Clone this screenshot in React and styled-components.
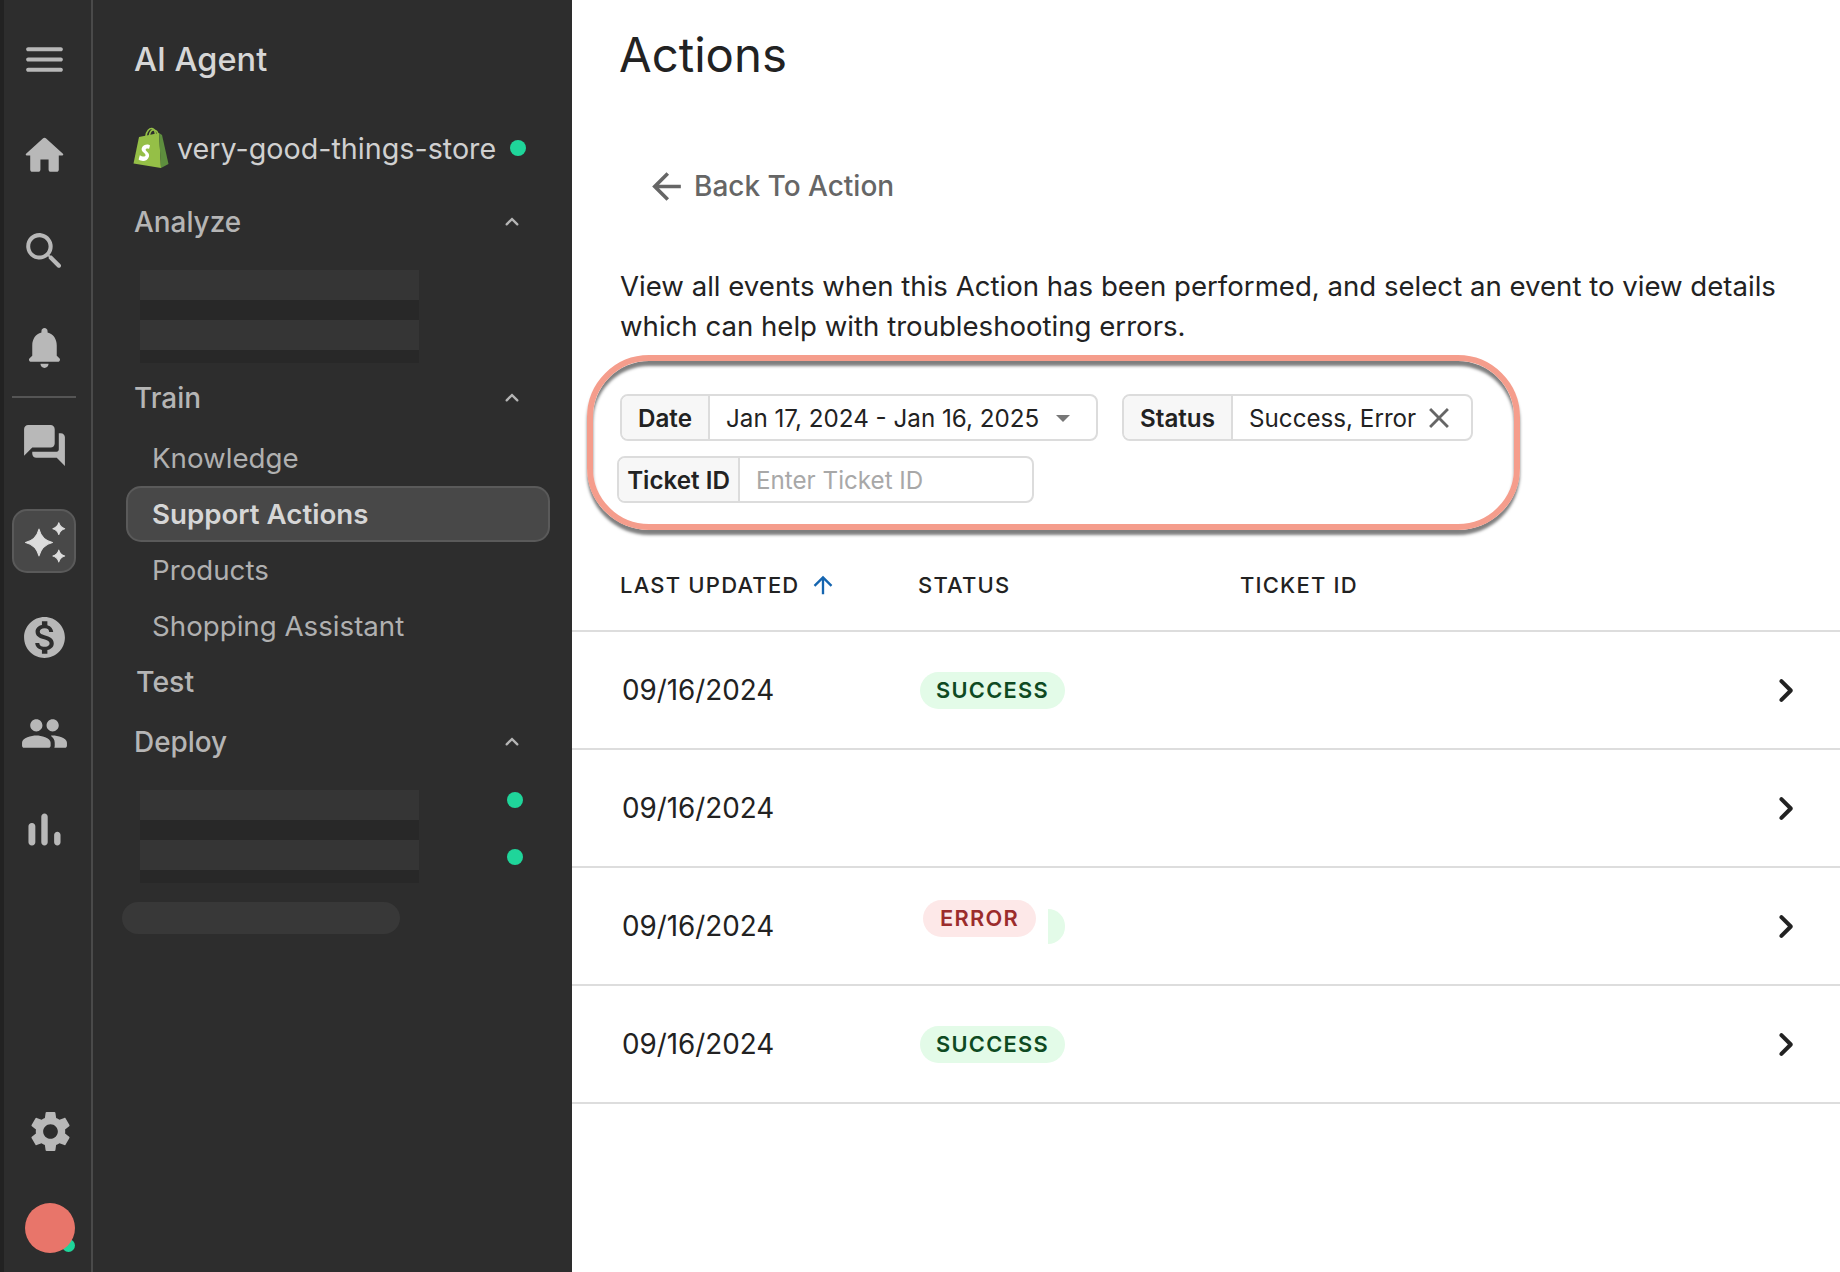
import React from 'react'
import styled, { createGlobalStyle } from 'styled-components'

const GlobalStyle = createGlobalStyle`
  html, body {
    margin: 0;
    padding: 0;
    background: #fff;
  }
  body {
    font-family: Inter, "Liberation Sans", sans-serif;
  }
`

const paths = {
  menu: 'M4 18h16c.55 0 1-.45 1-1s-.45-1-1-1H4c-.55 0-1 .45-1 1s.45 1 1 1zm0-5h16c.55 0 1-.45 1-1s-.45-1-1-1H4c-.55 0-1 .45-1 1s.45 1 1 1zM3 7c0 .55.45 1 1 1h16c.55 0 1-.45 1-1s-.45-1-1-1H4c-.55 0-1 .45-1 1z',
  home: 'M10 19v-5h4v5c0 .55.45 1 1 1h3c.55 0 1-.45 1-1v-7h1.7c.46 0 .68-.57.33-.87L12.67 3.6c-.38-.34-.96-.34-1.34 0l-8.36 7.53c-.34.3-.13.87.33.87H5v7c0 .55.45 1 1 1h3c.55 0 1-.45 1-1z',
  search: 'M15.5 14h-.79l-.28-.27c1.2-1.4 1.82-3.31 1.48-5.34-.47-2.78-2.79-5-5.59-5.34-4.2-.52-7.74 3.01-7.21 7.21.34 2.8 2.56 5.12 5.34 5.59 2.03.34 3.94-.28 5.34-1.48l.27.28v.79l4.25 4.25c.41.41 1.08.41 1.49 0 .41-.41.41-1.08 0-1.49L15.5 14zm-6 0C7.01 14 5 11.99 5 9.5S7.01 5 9.5 5 14 7.01 14 9.5 11.99 14 9.5 14z',
  bell: 'M12 22c1.1 0 2-.9 2-2h-4c0 1.1.9 2 2 2zm6-6v-5c0-3.07-1.63-5.64-4.5-6.32V4c0-.83-.67-1.5-1.5-1.5s-1.5.67-1.5 1.5v.68C7.64 5.36 6 7.92 6 11v5l-1.29 1.29c-.63.63-.19 1.71.7 1.71h13.17c.89 0 1.34-1.08.71-1.71L18 16z',
  forum: 'M20 6h-1v8c0 .55-.45 1-1 1H6v1c0 1.1.9 2 2 2h10l4 4V8c0-1.1-.9-2-2-2zm-3 5V4c0-1.1-.9-2-2-2H4c-1.1 0-2 .9-2 2v13l4-4h9c1.1 0 2-.9 2-2z',
  sparkle: 'M9.3 5.9 Q10.6 11.2 15.9 12.5 Q10.6 13.8 9.3 19.1 Q8 13.8 2.7 12.5 Q8 11.2 9.3 5.9Z M19 2.8 Q19.6 5.1 21.9 5.7 Q19.6 6.3 19 8.6 Q18.4 6.3 16.1 5.7 Q18.4 5.1 19 2.8Z M19 16.2 Q19.6 18.5 21.9 19.1 Q19.6 19.7 19 22 Q18.4 19.7 16.1 19.1 Q18.4 18.5 19 16.2Z',
  dollar: 'M12 2C6.48 2 2 6.48 2 12s4.48 10 10 10 10-4.48 10-10S17.52 2 12 2zm1.41 16.09V20h-2.67v-1.93c-1.71-.36-3.16-1.46-3.27-3.4h1.96c.1 1.05.82 1.87 2.65 1.87 1.96 0 2.4-.98 2.4-1.59 0-.83-.44-1.61-2.67-2.14-2.48-.6-4.18-1.62-4.18-3.67 0-1.72 1.39-2.84 3.11-3.21V4h2.67v1.95c1.86.45 2.79 1.86 2.85 3.39H14.3c-.05-1.11-.64-1.87-2.22-1.87-1.5 0-2.4.68-2.4 1.64 0 .84.65 1.39 2.67 1.91s4.18 1.39 4.18 3.91c-.01 1.83-1.38 2.83-3.12 3.16z',
  people: 'M16 11c1.66 0 2.99-1.34 2.99-3S17.66 5 16 5s-3 1.34-3 3 1.34 3 3 3zm-8 0c1.66 0 2.99-1.34 2.99-3S9.66 5 8 5 5 6.34 5 8s1.34 3 3 3zm0 2c-2.33 0-7 1.17-7 3.5V18c0 .55.45 1 1 1h12c.55 0 1-.45 1-1v-1.5c0-2.33-4.67-3.5-7-3.5zm8 0c-.29 0-.62.02-.97.05.02.01.03.03.04.04 1.14.83 1.93 1.94 1.93 3.41V18c0 .35-.07.69-.18 1H22c.55 0 1-.45 1-1v-1.5c0-2.33-4.67-3.5-7-3.5z',
  bars: 'M6.4 9.2h.2c.77 0 1.4.63 1.4 1.4v7c0 .77-.63 1.4-1.4 1.4h-.2c-.77 0-1.4-.63-1.4-1.4v-7c0-.77.63-1.4 1.4-1.4zM12 5c.77 0 1.4.63 1.4 1.4v11.2c0 .77-.63 1.4-1.4 1.4-.77 0-1.4-.63-1.4-1.4V6.4c0-.77.63-1.4 1.4-1.4zm5.6 8c.77 0 1.4.63 1.4 1.4v3.2c0 .77-.63 1.4-1.4 1.4-.77 0-1.4-.63-1.4-1.4v-3.2c0-.77.63-1.4 1.4-1.4z',
  settings: 'M19.14 12.94c.04-.3.06-.61.06-.94 0-.32-.02-.64-.07-.94l2.03-1.58c.18-.14.23-.41.12-.61l-1.92-3.32c-.12-.22-.37-.29-.59-.22l-2.39.96c-.5-.38-1.03-.7-1.62-.94l-.36-2.54c-.04-.24-.24-.41-.48-.41h-3.84c-.24 0-.43.17-.47.41l-.36 2.54c-.59.24-1.13.57-1.62.94l-2.39-.96c-.22-.08-.47 0-.59.22L2.74 8.87c-.12.21-.08.47.12.61l2.03 1.58c-.05.3-.09.63-.09.94s.02.64.07.94l-2.03 1.58c-.18.14-.23.41-.12.61l1.92 3.32c.12.22.37.29.59.22l2.39-.96c.5.38 1.03.7 1.62.94l.36 2.54c.05.24.24.41.48.41h3.84c.24 0 .44-.17.47-.41l.36-2.54c.59-.24 1.13-.56 1.62-.94l2.39.96c.22.08.47 0 .59-.22l1.92-3.32c.12-.22.07-.47-.12-.61l-2.01-1.58zM12 15.6c-1.98 0-3.6-1.62-3.6-3.6s1.62-3.6 3.6-3.6 3.6 1.62 3.6 3.6-1.62 3.6-3.6 3.6z',
  chevronRight: 'M9.29 6.71c-.39.39-.39 1.02 0 1.41L13.17 12l-3.88 3.88c-.39.39-.39 1.02 0 1.41.39.39 1.02.39 1.41 0l4.59-4.59c.39-.39.39-1.02 0-1.41L10.7 6.7c-.38-.38-1.02-.38-1.41.01z',
  chevronUp: 'M11.29 8.71 6.7 13.3c-.39.39-.39 1.02 0 1.41.39.39 1.02.39 1.41 0L12 10.83l3.88 3.88c.39.39 1.02.39 1.41 0 .39-.39.39-1.02 0-1.41L12.7 8.71c-.38-.39-1.02-.39-1.41 0z',
  arrowBack: 'M20 11H7.83l5.59-5.59L12 4l-8 8 8 8 1.41-1.41L7.83 13H20v-2z',
  arrowUp: 'M4 12l1.41 1.41L11 7.83V20h2V7.83l5.58 5.59L20 12l-8-8-8 8z',
  close: 'M19 6.41 17.59 5 12 10.59 6.41 5 5 6.41 10.59 12 5 17.59 6.41 19 12 13.41 17.59 19 19 17.59 13.41 12z',
}

const Icon = ({ name, size = 49, color = 'currentColor', thicken = 0 }) => (
  <svg width={size} height={size} viewBox="0 0 24 24" fill={color} aria-hidden="true">
    <path d={paths[name]} stroke={thicken ? color : 'none'} strokeWidth={thicken} strokeLinejoin="round" />
  </svg>
)

const ShopifyBag = () => (
  <svg width="36" height="42" viewBox="0 0 36 42" aria-hidden="true">
    <path d="M13 9 C13.5 4 16.5 1 19 1.5 C21.5 2 22.5 5 22.5 8.5" fill="none" stroke="#95bf47" strokeWidth="1.6" />
    <path d="M16.5 8 C17 4.5 19 2.5 21 3 C23.5 3.5 24.8 5.5 25 8" fill="none" stroke="#95bf47" strokeWidth="1.6" />
    <path d="M6 10 L26 6 L28 41 L0.5 36.5 Z" fill="#95bf47" />
    <path d="M26 6 L29 8 L35.5 37 L28 41 Z" fill="#5e8e3e" />
    <path
      d="M17 18.5 C15.5 17 10.5 17 8.8 21 C7.5 25 13 26 12.5 28.5 C12.2 30 9 29.8 6.8 28.2 L5.6 32.5 C9 35 14.5 34.5 16 29.5 C17 25.5 12.3 24.5 12.7 22.6 C13 21.3 15 21.3 16 22 Z"
      fill="#fff"
    />
  </svg>
)

const Page = styled.div`
  display: flex;
  width: 1840px;
  height: 1272px;
  overflow: hidden;
  background: #fff;
`

const Rail = styled.aside`
  display: flex;
  flex-direction: column;
  flex: 0 0 93px;
  box-sizing: border-box;
  padding: 11px 0 19px 8px;
  background: #2d2d2d;
  border-left: 4px solid #222222;
  border-right: 2px solid #4a4a4a;
  color: #b8b8b8;
`

const RailItem = styled.div`
  display: flex;
  align-items: center;
  justify-content: center;
  width: 64px;
  height: 96px;
`

const ActiveTile = styled.div`
  display: flex;
  align-items: center;
  justify-content: center;
  box-sizing: border-box;
  width: 64px;
  height: 64px;
  border: 2px solid #5a5a5a;
  border-radius: 15px;
  background: #484848;
  color: #dcdcdc;
`

const RailDivider = styled.hr`
  width: 64px;
  height: 2px;
  margin: 1px 0 -1px;
  border: 0;
  background: #555555;
`

const RailBottom = styled.div`
  display: flex;
  flex-direction: column;
  align-items: center;
  gap: 47px;
  width: 64px;
  margin-top: auto;
  margin-left: 6px;
`

const AvatarLayer = styled.div`
  position: relative;
  z-index: 0;
`

const Avatar = styled.div`
  position: relative;
  width: 50px;
  height: 50px;
  border-radius: 50%;
  background: #e8756a;

  &::before {
    content: '';
    position: absolute;
    right: 0;
    bottom: 1px;
    z-index: -1;
    width: 13px;
    height: 13px;
    border-radius: 50%;
    background: #1fd59a;
  }
`

const Nav = styled.nav`
  flex: 0 0 479px;
  box-sizing: border-box;
  padding-top: 30px;
  padding-left: 41px;
  background: #2d2d2d;
  color: #b5b5b5;
`

const AppTitle = styled.div`
  height: 60px;
  font-size: 32.5px;
  font-weight: 500;
  line-height: 60px;
  color: #d6d6d6;
`

const StoreRow = styled.div`
  display: flex;
  align-items: center;
  gap: 8px;
  height: 42px;
  margin-top: 37px;
  margin-left: -1px;
  font-size: 28.7px;
  color: #d0d0d0;
`

const StatusDot = styled.span`
  flex: none;
  width: 16px;
  height: 16px;
  margin-left: 6px;
  border-radius: 50%;
  background: #1fd59a;
`

const SectionHead = styled.div`
  display: flex;
  align-items: center;
  justify-content: space-between;
  box-sizing: border-box;
  width: 392px;
  height: 40px;
  padding-top: 2px;
  margin-top: ${(p) => p.$top}px;
  font-size: 27.9px;
  font-weight: 500;
  color: #b5b5b5;
`

const ChevronBox = styled.span`
  display: flex;
  color: #b5b5b5;
`

const Skeleton = styled.div`
  display: flex;
  flex-direction: column;
  gap: 20px;
  width: 279px;
  height: 93px;
  margin-top: 29px;
  margin-left: 6px;
  background: #282828;
`

const SkeletonBar = styled.div`
  height: 30px;
  background: #353535;
`

const SkeletonWrap = styled.div`
  position: relative;
  margin-bottom: ${(p) => p.$bottom}px;
`

const SideDot = styled.span`
  position: absolute;
  left: 373px;
  top: ${(p) => p.$top}px;
  width: 16px;
  height: 16px;
  border-radius: 50%;
  background: #1fd59a;
`

const SubList = styled.div`
  margin-top: 13px;
`

const SubItem = styled.div`
  display: flex;
  align-items: center;
  box-sizing: border-box;
  width: 424px;
  height: 56px;
  margin-left: -8px;
  padding-left: 24px;
  border: 2px solid ${(p) => (p.$active ? '#5a5a5a' : 'transparent')};
  border-radius: 15px;
  background: ${(p) => (p.$active ? '#484848' : 'transparent')};
  font-size: 27.7px;
  font-weight: ${(p) => (p.$active ? 600 : 400)};
  color: ${(p) => (p.$active ? '#d6d6d6' : '#b0b0b0')};
`

const TestItem = styled.div`
  display: flex;
  align-items: center;
  box-sizing: border-box;
  height: 56px;
  margin-left: 2px;
  padding-bottom: 2px;
  font-size: 28.5px;
  font-weight: 500;
  color: #b5b5b5;
`

const GhostPill = styled.div`
  width: 278px;
  height: 32px;
  margin-left: -12px;
  border-radius: 16px;
  background: #383838;
`

const Main = styled.main`
  flex: 1;
  min-width: 0;
  padding-top: 25px;
  color: #222;
`

const Title = styled.h1`
  margin: 0 0 0 47px;
  font-size: 47.3px;
  font-weight: 400;
  line-height: 60px;
  color: #222;
`

const BackLink = styled.div`
  display: flex;
  align-items: center;
  gap: 6px;
  height: 40px;
  margin: 81px 0 0 73px;
  font-size: 28px;
  font-weight: 500;
  color: #666;
`

const Intro = styled.p`
  width: 1180px;
  margin: 60px 0 0 48px;
  font-size: 27.6px;
  line-height: 40px;
  color: #222;
`

const Highlight = styled.section`
  display: flex;
  flex-direction: column;
  gap: 15px;
  box-sizing: border-box;
  width: 933px;
  height: 175px;
  margin: 9px 0 0 15px;
  padding: 33px 0 0 27px;
  border: 6px solid #f59d8c;
  border-radius: 62px;
  box-shadow: 0 5px 3px rgba(0, 0, 0, 0.5), inset 0 5px 3px rgba(0, 0, 0, 0.5);
`

const FilterRow = styled.div`
  display: flex;
  gap: 24px;
  margin-left: ${(p) => p.$shift || 0}px;
`

const FilterGroup = styled.div`
  display: flex;
  box-sizing: border-box;
  width: ${(p) => p.$width}px;
  height: 47px;
  border: 2px solid #dcdcdc;
  border-radius: 8px;
  overflow: hidden;
  font-size: 24.2px;
`

const FilterLabel = styled.div`
  display: flex;
  align-items: center;
  justify-content: center;
  flex: 0 0 ${(p) => p.$width}px;
  box-sizing: border-box;
  padding-top: 1px;
  border-right: 2px solid #dcdcdc;
  background: #f7f7f7;
  font-weight: 600;
  color: #222;
`

const FilterValue = styled.div`
  display: flex;
  align-items: center;
  flex: 1;
  padding: 1px 0 0 16px;
  color: ${(p) => (p.$placeholder ? '#a8a8a8' : '#222')};
`

const ClearIcon = styled.span`
  display: flex;
  margin-left: 6px;
  color: #666;
`

const Caret = styled.span`
  width: 0;
  height: 0;
  margin-left: 17px;
  border-left: 7.5px solid transparent;
  border-right: 7.5px solid transparent;
  border-top: 7px solid #777;
`

const HeadRow = styled.div`
  display: grid;
  grid-template-columns: 298px 322px 1fr;
  align-items: center;
  box-sizing: border-box;
  height: 102px;
  padding: 9px 0 0 48px;
  border-bottom: 2px solid #dddddd;
  font-size: 22px;
  font-weight: 500;
  letter-spacing: 1.2px;
  color: #222;
`

const SortCell = styled.div`
  display: flex;
  align-items: center;
  gap: 10px;
`

const SortArrow = styled.span`
  display: flex;
  color: #1565b0;
`

const Row = styled.div`
  display: grid;
  grid-template-columns: 298px 1fr 49px;
  align-items: center;
  box-sizing: border-box;
  height: 118px;
  padding: 0 30px 0 50px;
  border-bottom: 2px solid #dddddd;
  font-size: 27.8px;
  color: #222;
`

const StatusCell = styled.div`
  display: flex;
  align-items: center;
`

const Badge = styled.span`
  display: inline-flex;
  align-items: center;
  justify-content: center;
  box-sizing: border-box;
  height: 37px;
  padding: 0 ${(p) => (p.$error ? 17 : 16)}px;
  border-radius: 19px;
  font-size: 21.8px;
  font-weight: 600;
  letter-spacing: 1.3px;
  background: ${(p) => (p.$error ? '#fde8e8' : '#e3fbe8')};
  color: ${(p) => (p.$error ? '#9b2c2c' : '#0e4a22')};
  ${(p) => p.$error && 'margin: -16px 0 0 3px;'}
`

const BadgeSliver = styled.span`
  width: 17px;
  height: 35px;
  margin-left: 12px;
  border-radius: 0 18px 18px 0;
  background: #e3fbe8;
`

const railIcons = ['menu', 'home', 'search', 'bell']

const rows = [
  { status: 'SUCCESS' },
  { status: null },
  { status: 'ERROR' },
  { status: 'SUCCESS' },
]

const subItems = ['Knowledge', 'Support Actions', 'Products', 'Shopping Assistant']

export default function App() {
  return (
    <>
      <GlobalStyle />
      <Page>
        <Rail>
          {railIcons.map((name) => (
            <RailItem key={name}>
              <Icon name={name} />
            </RailItem>
          ))}
          <RailDivider />
          <RailItem>
            <Icon name="forum" />
          </RailItem>
          <RailItem>
            <ActiveTile>
              <Icon name="sparkle" thicken={0.5} />
            </ActiveTile>
          </RailItem>
          <RailItem>
            <Icon name="dollar" />
          </RailItem>
          <RailItem>
            <Icon name="people" />
          </RailItem>
          <RailItem>
            <Icon name="bars" size={55} />
          </RailItem>
          <RailBottom>
            <Icon name="settings" />
            <AvatarLayer>
              <Avatar />
            </AvatarLayer>
          </RailBottom>
        </Rail>

        <Nav>
          <AppTitle>AI Agent</AppTitle>
          <StoreRow>
            <ShopifyBag />
            <span>very-good-things-store</span>
            <StatusDot />
          </StoreRow>

          <SectionHead $top={32}>
            Analyze
            <ChevronBox><Icon name="chevronUp" size={28} /></ChevronBox>
          </SectionHead>
          <SkeletonWrap $bottom={14}>
            <Skeleton>
              <SkeletonBar />
              <SkeletonBar />
            </Skeleton>
          </SkeletonWrap>

          <SectionHead $top={0}>
            Train
            <ChevronBox><Icon name="chevronUp" size={28} /></ChevronBox>
          </SectionHead>
          <SubList>
            {subItems.map((item) => (
              <SubItem key={item} $active={item === 'Support Actions'}>{item}</SubItem>
            ))}
            <TestItem>Test</TestItem>
          </SubList>

          <SectionHead $top={11}>
            Deploy
            <ChevronBox><Icon name="chevronUp" size={28} /></ChevronBox>
          </SectionHead>
          <SkeletonWrap $bottom={19}>
            <Skeleton>
              <SkeletonBar />
              <SkeletonBar />
            </Skeleton>
            <SideDot $top={2} />
            <SideDot $top={59} />
          </SkeletonWrap>
          <GhostPill />
        </Nav>

        <Main>
          <Title>Actions</Title>
          <BackLink>
            <Icon name="arrowBack" size={43} />
            Back To Action
          </BackLink>
          <Intro>
            View all events when this Action has been performed, and select an event to view details
            which can help with troubleshooting errors.
          </Intro>

          <Highlight>
            <FilterRow>
              <FilterGroup $width={478}>
                <FilterLabel $width={88}>Date</FilterLabel>
                <FilterValue>
                  Jan 17, 2024 - Jan 16, 2025
                  <Caret />
                </FilterValue>
              </FilterGroup>
              <FilterGroup $width={351}>
                <FilterLabel $width={109}>Status</FilterLabel>
                <FilterValue>
                  Success, Error
                  <ClearIcon><Icon name="close" size={34} /></ClearIcon>
                </FilterValue>
              </FilterGroup>
            </FilterRow>
            <FilterRow $shift={-3}>
              <FilterGroup $width={417}>
                <FilterLabel $width={121}>Ticket ID</FilterLabel>
                <FilterValue $placeholder>Enter Ticket ID</FilterValue>
              </FilterGroup>
            </FilterRow>
          </Highlight>

          <HeadRow>
            <SortCell>
              LAST UPDATED
              <SortArrow><Icon name="arrowUp" size={28} /></SortArrow>
            </SortCell>
            <div>STATUS</div>
            <div>TICKET ID</div>
          </HeadRow>

          {rows.map((row, i) => (
            <Row key={i}>
              <div>09/16/2024</div>
              <StatusCell>
                {row.status && <Badge $error={row.status === 'ERROR'}>{row.status}</Badge>}
                {row.status === 'ERROR' && <BadgeSliver />}
              </StatusCell>
              <Icon name="chevronRight" />
            </Row>
          ))}
        </Main>
      </Page>
    </>
  )
}
